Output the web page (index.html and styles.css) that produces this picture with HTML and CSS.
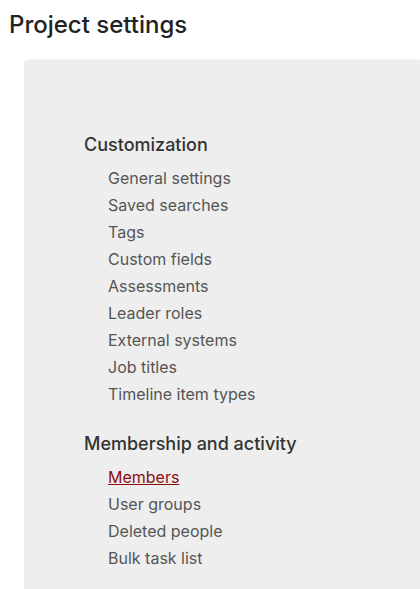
FILE: index.html
```html
<!DOCTYPE html>
<html lang="en">
<head>
<meta charset="utf-8">
<title>Project settings</title>
<link rel="stylesheet" href="styles.css">
</head>
<body>
<h1 class="page-title">Project settings</h1>
<div class="panel">
  <section class="group">
    <h2 class="group-title">Customization</h2>
    <ul class="links">
      <li><a href="#">General settings</a></li>
      <li><a href="#">Saved searches</a></li>
      <li><a href="#">Tags</a></li>
      <li><a href="#">Custom fields</a></li>
      <li><a href="#">Assessments</a></li>
      <li><a href="#">Leader roles</a></li>
      <li><a href="#">External systems</a></li>
      <li><a href="#">Job titles</a></li>
      <li><a href="#">Timeline item types</a></li>
    </ul>
  </section>
  <section class="group">
    <h2 class="group-title">Membership and activity</h2>
    <ul class="links">
      <li><a href="#" class="active">Members</a></li>
      <li><a href="#">User groups</a></li>
      <li><a href="#">Deleted people</a></li>
      <li><a href="#">Bulk task list</a></li>
    </ul>
  </section>
</div>
</body>
</html>
```
FILE: styles.css
```css
html, body {
  margin: 0;
  padding: 0;
  background: #ffffff;
  overflow: hidden;
}
body {
  font-family: Inter, "Noto Sans", sans-serif;
  color: #333333;
}
.page-title {
  margin: 10px 0 20px 9px;
  font-size: 24px;
  line-height: 30px;
  font-weight: 500;
  color: #222222;
}
.panel {
  margin-left: 24px;
  background: #eeeeee;
  border-top-left-radius: 4px;
  box-shadow: 0 -1px 1px rgba(0, 0, 0, 0.04);
  padding: 73px 0 18px 60px;
  height: 529px;
  box-sizing: border-box;
}
.group + .group {
  margin-top: 24px;
}
.group-title {
  margin: 0 0 8px 0;
  font-size: 18px;
  line-height: 24px;
  font-weight: 500;
  color: #333333;
}
.links {
  list-style: none;
  margin: 0;
  padding: 0 0 0 24px;
}
.links li {
  line-height: 27px;
  font-size: 16px;
}
.links a {
  color: #555555;
  text-decoration: none;
}
.links a.active {
  color: #8b0d0d;
  text-decoration: underline;
}
```
